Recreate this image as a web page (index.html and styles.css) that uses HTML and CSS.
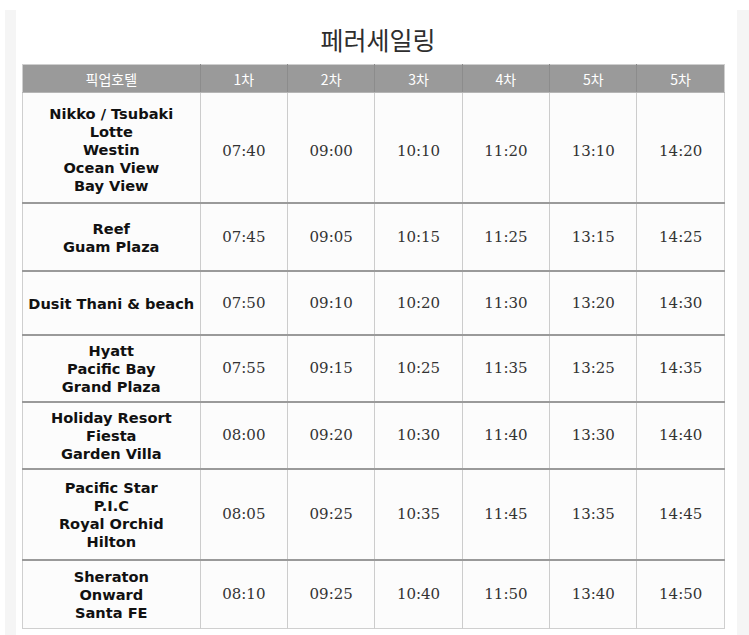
FILE: index.html
```html
<!DOCTYPE html>
<html lang="ko">
<head>
<meta charset="utf-8">
<title>페러세일링</title>
<link rel="stylesheet" href="styles.css">
</head>
<body>
<div class="page">
  <div class="strip strip-left"></div>
  <main class="content">
    <h1 class="title">페러세일링</h1>
    <table class="schedule">
      <colgroup>
        <col class="c-hotel"><col class="c-time"><col class="c-time"><col class="c-time"><col class="c-time"><col class="c-time"><col class="c-time">
      </colgroup>
      <thead>
        <tr class="head">
          <th>픽업호텔</th><th>1차</th><th>2차</th><th>3차</th><th>4차</th><th>5차</th><th>5차</th>
        </tr>
      </thead>
      <tbody>
        <tr class="r1">
          <td class="hotel">Nikko / Tsubaki<br>Lotte<br>Westin<br>Ocean View<br>Bay View</td>
          <td>07:40</td><td>09:00</td><td>10:10</td><td>11:20</td><td>13:10</td><td>14:20</td>
        </tr>
        <tr class="r2">
          <td class="hotel">Reef<br>Guam Plaza</td>
          <td>07:45</td><td>09:05</td><td>10:15</td><td>11:25</td><td>13:15</td><td>14:25</td>
        </tr>
        <tr class="r3">
          <td class="hotel">Dusit Thani &amp; beach</td>
          <td>07:50</td><td>09:10</td><td>10:20</td><td>11:30</td><td>13:20</td><td>14:30</td>
        </tr>
        <tr class="r4">
          <td class="hotel">Hyatt<br>Pacific Bay<br>Grand Plaza</td>
          <td>07:55</td><td>09:15</td><td>10:25</td><td>11:35</td><td>13:25</td><td>14:35</td>
        </tr>
        <tr class="r5">
          <td class="hotel">Holiday Resort<br>Fiesta<br>Garden Villa</td>
          <td>08:00</td><td>09:20</td><td>10:30</td><td>11:40</td><td>13:30</td><td>14:40</td>
        </tr>
        <tr class="r6">
          <td class="hotel">Pacific Star<br>P.I.C<br>Royal Orchid<br>Hilton</td>
          <td>08:05</td><td>09:25</td><td>10:35</td><td>11:45</td><td>13:35</td><td>14:45</td>
        </tr>
        <tr class="r7">
          <td class="hotel">Sheraton<br>Onward<br>Santa FE</td>
          <td>08:10</td><td>09:25</td><td>10:40</td><td>11:50</td><td>13:40</td><td>14:50</td>
        </tr>
      </tbody>
    </table>
  </main>
  <div class="strip strip-right"></div>
</div>
</body>
</html>
```
FILE: styles.css
```css
html, body {
  margin: 0;
  padding: 0;
  background: #ffffff;
}

.page {
  display: flex;
  align-items: stretch;
  padding: 10px 0 0 5px;
  min-height: 625px;
}

.strip {
  background: #f5f5f5;
}

.strip-left {
  width: 11px;
}

.strip-right {
  width: 12px;
}

.content {
  width: 709px;
  padding: 0 12px 0 6px;
  background: #ffffff;
}

.title {
  margin: 0;
  height: 54px;
  padding-top: 14px;
  box-sizing: border-box;
  text-align: center;
  font-family: "Noto Sans CJK KR", "Noto Sans", sans-serif;
  font-weight: 400;
  font-size: 25px;
  line-height: 30px;
  color: #2e2e2e;
  padding-left: 9px;
}

.schedule {
  width: 703px;
  border-collapse: collapse;
  table-layout: fixed;
  background: #fcfcfc;
  border: 1px solid #cfcfcf;
}

.c-hotel { width: 177px; }
.c-time { width: 87px; }

.head th {
  height: 27px;
  padding: 0;
  background: #9a9a9a;
  color: #ffffff;
  font-family: "Noto Sans CJK KR", "Noto Sans", sans-serif;
  font-weight: 400;
  font-size: 14px;
  border-left: 1px solid #8c8c8c;
  border-bottom: 1px solid #b5b5b5;
  vertical-align: middle;
}

.head th:first-child {
  border-left: none;
}

.schedule td {
  padding: 0;
  text-align: center;
  vertical-align: middle;
  font-family: "DejaVu Serif", "Liberation Serif", serif;
  font-size: 15px;
  color: #333333;
  border-left: 1px solid #cccccc;
  border-top: 2px solid #9a9a9a;
}

.schedule tbody tr:first-child td {
  border-top: none;
}

.schedule td.hotel {
  font-family: "DejaVu Sans", "Liberation Sans", sans-serif;
  font-weight: 700;
  font-size: 14.6px;
  line-height: 18px;
  color: #111111;
  border-left: none;
  padding-top: 2px;
}

.r1 td {
  padding-top: 7px;
}

.schedule .r1 td.hotel {
  padding-top: 6px;
}

.r1 { height: 110px; }
.r2 { height: 68px; }
.r3 { height: 64px; }
.r4 { height: 67px; }
.r5 { height: 67px; }
.r6 { height: 91px; }
.r7 { height: 69px; }
```
